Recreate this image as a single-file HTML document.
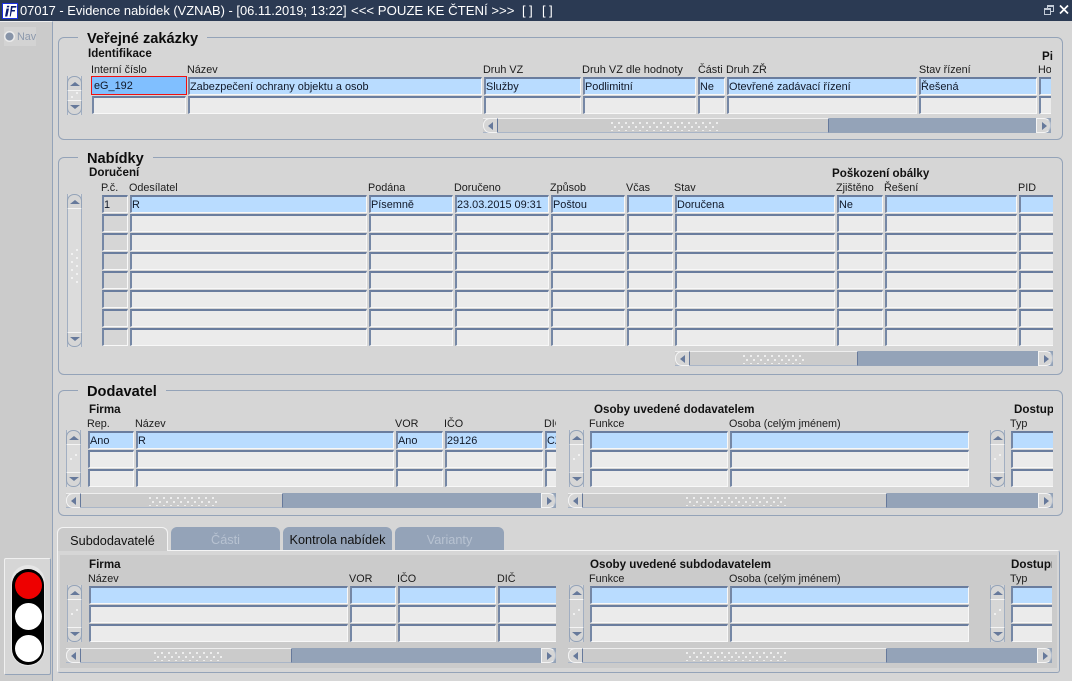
<!DOCTYPE html>
<html lang="cs"><head><meta charset="utf-8"><title>Evidence nabídek</title>
<style>
html,body{margin:0;padding:0}
body{width:1072px;height:681px;overflow:hidden;position:relative;background:#d6d6d6;font-family:"Liberation Sans",Arial,sans-serif;color:#000}
div,span,b,i,u{position:absolute;box-sizing:border-box;display:block;font-style:normal;text-decoration:none}
#tb{left:0;top:0;width:1072px;height:21px;background:#2b3a53;color:#fff;font-size:12.9px;line-height:21px;white-space:pre}
.fr{border:1px solid #94a3b8;border-radius:6px}
.t{font-weight:bold;font-size:14.6px;line-height:16px;background:#d6d6d6;padding:0 9px;white-space:nowrap;color:#0c0c0c}
.s{font-weight:bold;font-size:11.6px;line-height:14px;white-space:nowrap;color:#111}
.l{font-size:10.8px;line-height:14px;white-space:nowrap;color:#1c1c1c;overflow:hidden}
.r{left:0;width:0;height:18px}
.r i{top:0;height:18px;background:#ebebeb;border-top:2px solid #6a7d9e;border-left:2px solid #7587a5;border-right:1px solid #f8f8f8;border-bottom:1px solid #f8f8f8;font-size:10.9px;line-height:17px;padding-left:0;white-space:nowrap;overflow:hidden;color:#101828}
.r i.b{background:#b9dcff}
.r i.g{background:#d6d6d6}
.vs{width:15px;background:#dcdcdc;border-left:1px solid #a2afc2;border-right:1px solid #a2afc2}
.vs .u,.vs .d{left:-1px;width:15px;height:15px;background:#d6d6d6;border:1px solid #94a3b8}
.vs .u{top:0;border-radius:7px 7px 0 0;border-bottom-color:#f4f4f4}
.vs .d{bottom:0;border-radius:0 0 7px 7px;border-top-color:#f4f4f4}
.vs .u:after,.vs .d:after{content:"";position:absolute;left:1.500px;border-left:5px solid transparent;border-right:5px solid transparent}
.vs .u:after{top:5px;border-bottom:4px solid #66799b}
.vs .d:after{top:4px;border-top:4px solid #66799b}
.hs{height:15px;background:#94a3b8}
.hs .th{top:0;height:15px;background:#cbcbcb;border-top:1px solid #eee;border-bottom:1px solid #a9b5c7;border-right:1px solid #66799b}
.hs .lb,.hs .rb{top:0;width:15px;height:15px;background:#d6d6d6}
.hs .lb{left:0;border-radius:7px 0 0 7px;border-left:1px solid #f4f4f4;border-top:1px solid #f4f4f4;border-bottom:1px solid #f4f4f4;border-right:1px solid #66799b}
.hs .rb{right:0;border-radius:0 7px 7px 0;border-left:1px solid #f4f4f4;border-top:1px solid #f4f4f4;border-bottom:1px solid #f4f4f4;border-right:1px solid #b6c0cf}
.hs .lb:after,.hs .rb:after{content:"";position:absolute;top:2.500px;border-top:4.500px solid transparent;border-bottom:4.500px solid transparent}
.hs .lb:after{left:4px;border-right:5px solid #66799b}
.hs .rb:after{left:5px;border-left:5px solid #66799b}
.gr{background-image:radial-gradient(circle at 1px 1px,#f6f6f6 0.9px,transparent 1.1px),radial-gradient(circle at 1px 1px,#f6f6f6 0.9px,transparent 1.1px);background-size:7px 8px;background-position:0 0,3px 4px}
.gv{background-image:radial-gradient(circle at 1px 1px,#f6f6f6 0.9px,transparent 1.1px),radial-gradient(circle at 1px 1px,#f6f6f6 0.9px,transparent 1.1px);background-size:8px 8px;background-position:5px 0,0 4px}
.tab{top:527px;height:24px;border-radius:6px 6px 0 0;font-size:12.7px;line-height:26px;text-align:center}
.on{background:#cbcbcb;border:1px solid #f4f4f4;border-bottom:0;color:#111;z-index:2}
.off{background:#94a3b8;color:#111;border-bottom:1px solid #f4f4f4}
.dis{color:#b7c2d1}
</style></head><body>

<div id="tb"><span style="left:20px;top:0">07017 - Evidence nabídek (VZNAB) - [06.11.2019; 13:22]</span><span style="left:351px;top:0;font-size:13.2px">&lt;&lt;&lt; POUZE KE ČTENÍ &gt;&gt;&gt;</span><span style="left:522px;top:0">[ ]</span><span style="left:542px;top:0">[ ]</span></div>
<svg style="position:absolute;left:2px;top:3px" width="16" height="16" viewBox="0 0 16 16"><rect x="0.5" y="0.5" width="15" height="15" fill="#fff" stroke="#1a2fe0"/><path d="M4.500 5.500H7L5.300 13.500H3zM5.100 2.800h2.300l-.4 1.600H4.700zM9 3h5.500l-.3 1.600h-3.700l-.5 2.400h3.100l-.3 1.500h-3.100l-1 5H7.700z" fill="#0a1a70"/></svg>
<svg style="position:absolute;left:1042px;top:4px" width="28" height="14" viewBox="0 0 28 14"><path d="M5.500 4V1.500h6v6H9M5.500 2.500h6" fill="none" stroke="#c2cad6"/><rect x="2.500" y="4.500" width="6" height="6" fill="#2b3a53" stroke="#c2cad6"/><path d="M3 5.500h5" stroke="#c2cad6"/><path d="M18 1.500l8 8M26 1.500l-8 8" stroke="#fff" stroke-width="1.700"/></svg>

<!-- left panel -->
<div style="left:0;top:21px;width:53px;height:660px;background:#cbcbcb;border-right:1px solid #94a3b8;border-top:1px solid #eee"></div>
<div style="left:4px;top:27px;width:32px;height:19px;background:#d3d3d3"></div>
<svg style="position:absolute;left:3px;top:30px" width="13" height="13"><circle cx="6.500" cy="6.500" r="4.800" fill="#8794a8" stroke="#ececec" stroke-width="1.500"/></svg>
<div class="l" style="left:17px;top:30px;color:#8c99ad">Nav</div>
<div style="left:4px;top:558px;width:47px;height:117px;background:#d6d6d6;border:1px solid #94a3b8;border-top-color:#f0f0f0;border-left-color:#f0f0f0;border-radius:2px"></div>
<div style="left:11px;top:565px;width:34px;height:101px;background:#e6e6e6;border-radius:17px"></div>
<div style="left:12px;top:569px;width:32px;height:96px;background:#000;border-radius:16px"></div>
<div style="left:15px;top:572px;width:27px;height:27px;background:#ee0000;border-radius:50%"></div>
<div style="left:15px;top:603px;width:27px;height:27px;background:#fff;border-radius:50%"></div>
<div style="left:15px;top:635px;width:27px;height:27px;background:#fff;border-radius:50%"></div>

<!-- Veřejné zakázky -->
<div class="fr" style="left:58px;top:37px;width:1005px;height:103px"></div>
<div class="t" style="left:78px;top:31px">Veřejné zakázky</div>
<div class="s" style="left:88px;top:47px">Identifikace</div>
<div class="s" style="left:1042px;top:50px">Pi</div>
<div class="l" style="left:91px;top:63px">Interní číslo</div>
<div class="l" style="left:187px;top:63px">Název</div>
<div class="l" style="left:483px;top:63px">Druh VZ</div>
<div class="l" style="left:582px;top:63px;font-size:11px">Druh VZ dle hodnoty</div>
<div class="l" style="left:698px;top:63px">Části</div>
<div class="l" style="left:726px;top:63px">Druh ZŘ</div>
<div class="l" style="left:919px;top:63px">Stav řízení</div>
<div class="l" style="left:1038px;top:63px;width:13px">Ho</div>
<div class="r" style="top:77px"><i class="b" style="left:188px;width:294px">Zabezpečení ochrany objektu a osob</i><i class="b" style="left:484px;width:97px">Služby</i><i class="b" style="left:583px;width:113px">Podlimitní</i><i class="b" style="left:698px;width:27px">Ne</i><i class="b" style="left:727px;width:190px">Otevřené zadávací řízení</i><i class="b" style="left:919px;width:118px">Řešená</i><i class="b" style="left:1039px;width:12px;border-right:0"></i></div>
<div style="left:91px;top:76px;width:96px;height:19px;background:#80bfff;border:1px solid #f01010;font-size:10.9px;line-height:18px;padding-left:2px;color:#101828">eG_192</div>
<div class="r" style="top:96px"><i style="left:92px;width:94px"></i><i style="left:188px;width:294px"></i><i style="left:484px;width:97px"></i><i style="left:583px;width:113px"></i><i style="left:698px;width:27px"></i><i style="left:727px;width:190px"></i><i style="left:919px;width:118px"></i><i style="left:1039px;width:12px;border-right:0"></i></div>
<div class="vs" style="left:67px;top:76px;width:15px;height:39px"><b class="u"></b><b class="d"></b><span class="gv" style="left:3px;top:16px;width:8px;height:7px"></span></div>
<div class="hs" style="left:483px;top:118px;width:568px"><b class="th" style="left:0;width:346px"></b><b class="lb"></b><b class="rb"></b><span class="gr" style="left:128px;top:4px;width:108px;height:9px"></span></div>

<!-- Nabídky -->
<div class="fr" style="left:58px;top:157px;width:1005px;height:218px"></div>
<div class="t" style="left:78px;top:151px">Nabídky</div>
<div class="s" style="left:89px;top:166px">Doručení</div>
<div class="s" style="left:832px;top:167px">Poškození obálky</div>
<div class="l" style="left:101px;top:181px">P.č.</div>
<div class="l" style="left:129px;top:181px">Odesílatel</div>
<div class="l" style="left:368px;top:181px">Podána</div>
<div class="l" style="left:454px;top:181px">Doručeno</div>
<div class="l" style="left:550px;top:181px">Způsob</div>
<div class="l" style="left:626px;top:181px">Včas</div>
<div class="l" style="left:674px;top:181px">Stav</div>
<div class="l" style="left:836px;top:181px">Zjištěno</div>
<div class="l" style="left:884px;top:181px">Řešení</div>
<div class="l" style="left:1018px;top:181px">PID</div>
<div class="r" style="top:195px"><i class="g" style="left:102px;width:26px">1</i><i class="b" style="left:130px;width:237px">R</i><i class="b" style="left:369px;width:84px">Písemně</i><i class="b" style="left:455px;width:94px">23.03.2015 09:31</i><i class="b" style="left:551px;width:74px">Poštou</i><i class="b" style="left:627px;width:46px"></i><i class="b" style="left:675px;width:160px">Doručena</i><i class="b" style="left:837px;width:46px">Ne</i><i class="b" style="left:885px;width:132px"></i><i class="b" style="left:1019px;width:34px;border-right:0"></i></div>
<div class="r" style="top:214px"><i class="g" style="left:102px;width:26px"></i><i style="left:130px;width:237px"></i><i style="left:369px;width:84px"></i><i style="left:455px;width:94px"></i><i style="left:551px;width:74px"></i><i style="left:627px;width:46px"></i><i style="left:675px;width:160px"></i><i style="left:837px;width:46px"></i><i style="left:885px;width:132px"></i><i style="left:1019px;width:34px;border-right:0"></i></div>
<div class="r" style="top:233px"><i class="g" style="left:102px;width:26px"></i><i style="left:130px;width:237px"></i><i style="left:369px;width:84px"></i><i style="left:455px;width:94px"></i><i style="left:551px;width:74px"></i><i style="left:627px;width:46px"></i><i style="left:675px;width:160px"></i><i style="left:837px;width:46px"></i><i style="left:885px;width:132px"></i><i style="left:1019px;width:34px;border-right:0"></i></div>
<div class="r" style="top:252px"><i class="g" style="left:102px;width:26px"></i><i style="left:130px;width:237px"></i><i style="left:369px;width:84px"></i><i style="left:455px;width:94px"></i><i style="left:551px;width:74px"></i><i style="left:627px;width:46px"></i><i style="left:675px;width:160px"></i><i style="left:837px;width:46px"></i><i style="left:885px;width:132px"></i><i style="left:1019px;width:34px;border-right:0"></i></div>
<div class="r" style="top:271px"><i class="g" style="left:102px;width:26px"></i><i style="left:130px;width:237px"></i><i style="left:369px;width:84px"></i><i style="left:455px;width:94px"></i><i style="left:551px;width:74px"></i><i style="left:627px;width:46px"></i><i style="left:675px;width:160px"></i><i style="left:837px;width:46px"></i><i style="left:885px;width:132px"></i><i style="left:1019px;width:34px;border-right:0"></i></div>
<div class="r" style="top:290px"><i class="g" style="left:102px;width:26px"></i><i style="left:130px;width:237px"></i><i style="left:369px;width:84px"></i><i style="left:455px;width:94px"></i><i style="left:551px;width:74px"></i><i style="left:627px;width:46px"></i><i style="left:675px;width:160px"></i><i style="left:837px;width:46px"></i><i style="left:885px;width:132px"></i><i style="left:1019px;width:34px;border-right:0"></i></div>
<div class="r" style="top:309px"><i class="g" style="left:102px;width:26px"></i><i style="left:130px;width:237px"></i><i style="left:369px;width:84px"></i><i style="left:455px;width:94px"></i><i style="left:551px;width:74px"></i><i style="left:627px;width:46px"></i><i style="left:675px;width:160px"></i><i style="left:837px;width:46px"></i><i style="left:885px;width:132px"></i><i style="left:1019px;width:34px;border-right:0"></i></div>
<div class="r" style="top:328px"><i class="g" style="left:102px;width:26px"></i><i style="left:130px;width:237px"></i><i style="left:369px;width:84px"></i><i style="left:455px;width:94px"></i><i style="left:551px;width:74px"></i><i style="left:627px;width:46px"></i><i style="left:675px;width:160px"></i><i style="left:837px;width:46px"></i><i style="left:885px;width:132px"></i><i style="left:1019px;width:34px;border-right:0"></i></div>
<div class="vs" style="left:67px;top:194px;height:153px"><b class="u"></b><b class="d"></b><span class="gv" style="left:3px;top:55px;width:8px;height:34px"></span></div>
<div class="hs" style="left:675px;top:351px;width:378px"><b class="th" style="left:0;width:183px"></b><b class="lb"></b><b class="rb"></b><span class="gr" style="left:68px;top:4px;width:61px;height:9px"></span></div>

<!-- Dodavatel -->
<div class="fr" style="left:58px;top:390px;width:1005px;height:126px"></div>
<div class="t" style="left:78px;top:384px">Dodavatel</div>
<div class="s" style="left:89px;top:403px">Firma</div>
<div class="s" style="left:594px;top:403px">Osoby uvedené dodavatelem</div>
<div class="s" style="left:1014px;top:403px;width:39px;overflow:hidden">Dostupnost</div>
<div class="l" style="left:87px;top:417px">Rep.</div>
<div class="l" style="left:135px;top:417px">Název</div>
<div class="l" style="left:395px;top:417px">VOR</div>
<div class="l" style="left:444px;top:417px">IČO</div>
<div class="l" style="left:544px;top:417px;width:12px">DIČ</div>
<div class="l" style="left:589px;top:417px">Funkce</div>
<div class="l" style="left:729px;top:417px">Osoba (celým jménem)</div>
<div class="l" style="left:1010px;top:417px">Typ</div>
<div class="r" style="top:431px"><i class="b" style="left:88px;width:46px">Ano</i><i class="b" style="left:136px;width:258px">R</i><i class="b" style="left:396px;width:47px">Ano</i><i class="b" style="left:445px;width:98px">29126</i><i class="b" style="left:545px;width:11px;border-right:0">CZ</i><i class="b" style="left:590px;width:138px"></i><i class="b" style="left:730px;width:239px"></i><i class="b" style="left:1011px;width:42px;border-right:0"></i></div>
<div class="r" style="top:450px"><i style="left:88px;width:46px"></i><i style="left:136px;width:258px"></i><i style="left:396px;width:47px"></i><i style="left:445px;width:98px"></i><i style="left:545px;width:11px;border-right:0"></i><i style="left:590px;width:138px"></i><i style="left:730px;width:239px"></i><i style="left:1011px;width:42px;border-right:0"></i></div>
<div class="r" style="top:469px"><i style="left:88px;width:46px"></i><i style="left:136px;width:258px"></i><i style="left:396px;width:47px"></i><i style="left:445px;width:98px"></i><i style="left:545px;width:11px;border-right:0"></i><i style="left:590px;width:138px"></i><i style="left:730px;width:239px"></i><i style="left:1011px;width:42px;border-right:0"></i></div>
<div class="vs" style="left:66px;top:430px;height:57px"><b class="u"></b><b class="d"></b><span class="gv" style="left:3px;top:24px;width:8px;height:7px"></span></div>
<div class="vs" style="left:569px;top:430px;height:57px"><b class="u"></b><b class="d"></b><span class="gv" style="left:3px;top:24px;width:8px;height:7px"></span></div>
<div class="vs" style="left:990px;top:430px;height:57px"><b class="u"></b><b class="d"></b><span class="gv" style="left:3px;top:24px;width:8px;height:7px"></span></div>
<div class="hs" style="left:66px;top:493px;width:490px"><b class="th" style="left:0;width:217px"></b><b class="lb"></b><b class="rb"></b><span class="gr" style="left:83px;top:4px;width:68px;height:9px"></span></div>
<div class="hs" style="left:568px;top:493px;width:485px"><b class="th" style="left:0;width:319px"></b><b class="lb"></b><b class="rb"></b><span class="gr" style="left:118px;top:4px;width:100px;height:9px"></span></div>

<!-- Tabs -->
<div style="left:57px;top:550px;width:1003px;height:123px;background:#d6d6d6;border:1px solid #94a3b8;border-top:1px solid #f4f4f4;border-left-color:#f4f4f4;border-radius:0 3px 3px 3px"></div>
<div style="left:60px;top:555px;width:997px;height:113px;background:#cbcbcb"></div>
<div class="tab on" style="left:57px;width:111px">Subdodavatelé</div>
<div class="tab off dis" style="left:171px;width:109px">Části</div>
<div class="tab off" style="left:283px;width:109px">Kontrola nabídek</div>
<div class="tab off dis" style="left:395px;width:109px">Varianty</div>
<div class="s" style="left:89px;top:558px">Firma</div>
<div class="s" style="left:590px;top:558px">Osoby uvedené subdodavatelem</div>
<div class="s" style="left:1011px;top:558px;width:41px;overflow:hidden">Dostupnost</div>
<div class="l" style="left:88px;top:572px">Název</div>
<div class="l" style="left:349px;top:572px">VOR</div>
<div class="l" style="left:397px;top:572px">IČO</div>
<div class="l" style="left:497px;top:572px">DIČ</div>
<div class="l" style="left:589px;top:572px">Funkce</div>
<div class="l" style="left:729px;top:572px">Osoba (celým jménem)</div>
<div class="l" style="left:1010px;top:572px">Typ</div>
<div class="r" style="top:586px"><i class="b" style="left:89px;width:259px"></i><i class="b" style="left:350px;width:46px"></i><i class="b" style="left:398px;width:98px"></i><i class="b" style="left:498px;width:58px;border-right:0"></i><i class="b" style="left:590px;width:138px"></i><i class="b" style="left:730px;width:239px"></i><i class="b" style="left:1011px;width:41px;border-right:0"></i></div>
<div class="r" style="top:605px"><i style="left:89px;width:259px"></i><i style="left:350px;width:46px"></i><i style="left:398px;width:98px"></i><i style="left:498px;width:58px;border-right:0"></i><i style="left:590px;width:138px"></i><i style="left:730px;width:239px"></i><i style="left:1011px;width:41px;border-right:0"></i></div>
<div class="r" style="top:624px"><i style="left:89px;width:259px"></i><i style="left:350px;width:46px"></i><i style="left:398px;width:98px"></i><i style="left:498px;width:58px;border-right:0"></i><i style="left:590px;width:138px"></i><i style="left:730px;width:239px"></i><i style="left:1011px;width:41px;border-right:0"></i></div>
<div class="vs" style="left:67px;top:585px;height:57px;background:#d6d6d6"><b class="u"></b><b class="d"></b><span class="gv" style="left:3px;top:24px;width:8px;height:7px"></span></div>
<div class="vs" style="left:569px;top:585px;height:57px;background:#d6d6d6"><b class="u"></b><b class="d"></b><span class="gv" style="left:3px;top:24px;width:8px;height:7px"></span></div>
<div class="vs" style="left:990px;top:585px;height:57px;background:#d6d6d6"><b class="u"></b><b class="d"></b><span class="gv" style="left:3px;top:24px;width:8px;height:7px"></span></div>
<div class="hs" style="left:66px;top:648px;width:490px"><b class="th" style="left:0;width:226px"></b><b class="lb"></b><b class="rb"></b><span class="gr" style="left:88px;top:4px;width:68px;height:9px"></span></div>
<div class="hs" style="left:568px;top:648px;width:484px"><b class="th" style="left:0;width:319px"></b><b class="lb"></b><b class="rb"></b><span class="gr" style="left:118px;top:4px;width:100px;height:9px"></span></div>
</body></html>
